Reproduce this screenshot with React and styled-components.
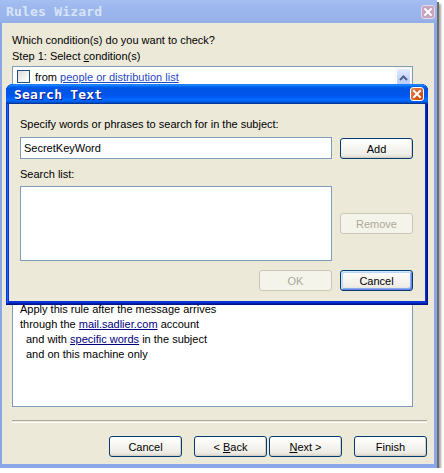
import React from 'react';
import styled, { createGlobalStyle } from 'styled-components';

const GlobalStyle = createGlobalStyle`
  html, body {
    margin: 0;
    padding: 0;
    background: #ffffff;
  }
  body {
    font-family: "Liberation Sans", Arial, sans-serif;
    font-size: 11px;
    color: #000000;
  }
`;

const Window = styled.div`
  position: relative;
  width: 437px;
  display: flex;
  flex-direction: column;
  padding: 0 3px 4px 2px;
  box-sizing: border-box;
  background: #8aa6e6;
  box-shadow: 2px 2px 0 #6d6d6d, 4px 4px 2px rgba(0, 0, 0, 0.35);
`;

const TitleBar = styled.div`
  height: 23px;
  margin: 0 -3px 0 -2px;
  display: flex;
  align-items: center;
  justify-content: space-between;
  padding: 0 2px 0 6px;
  background: ${(p) =>
    p.$active
      ? 'linear-gradient(180deg, #0058ee 0%, #3593ff 4%, #288eff 6%, #127dff 8%, #036ffc 10%, #0262ee 14%, #0057e5 20%, #0054e3 24%, #0055eb 56%, #005bf5 66%, #026afe 76%, #0062ef 86%, #0052d6 92%, #0040ab 94%, #003092 100%)'
      : 'linear-gradient(180deg, #a6bff2 0%, #9db8ee 30%, #9ab5ec 70%, #93aee6 100%)'};
`;

const Title = styled.span`
  font-family: "DejaVu Sans Mono", monospace;
  font-weight: bold;
  font-size: 13px;
  color: ${(p) => (p.$active ? '#ffffff' : '#d8e4f8')};
  text-shadow: ${(p) => (p.$active ? '1px 1px #0f1089' : 'none')};
  letter-spacing: 0.2px;
`;

const CloseButton = styled.div`
  width: 14px;
  height: 14px;
  box-sizing: border-box;
  border: 1px solid ${(p) => (p.$active ? '#ffffff' : '#e6d8e4')};
  border-radius: 3px;
  background: ${(p) =>
    p.$active
      ? 'radial-gradient(circle at 80% 80%, #cc4600 0%, #dc6527 55%, #e88a5a 100%)'
      : '#c7a5be'};
  display: flex;
  align-items: center;
  justify-content: center;
`;

const Body = styled.div`
  background: #ece9d8;
  display: flex;
  flex-direction: column;
  padding: 11px 7px 7px 10px;
`;

const Label = styled.div`
  line-height: 13px;
  height: 13px;
  margin-top: ${(p) => p.$mt || 0}px;
  white-space: nowrap;
`;

const ListBox = styled.div`
  width: 401px;
  height: ${(p) => p.$h}px;
  margin-top: ${(p) => p.$mt || 0}px;
  box-sizing: border-box;
  border: 1px solid #7f9db9;
  background: #ffffff;
  display: flex;
`;

const ListItems = styled.div`
  flex: 1;
  padding: 2px 2px;
`;

const CondRow = styled.div`
  display: flex;
  align-items: center;
  height: 15px;
  gap: 5px;
  padding-left: 2px;
`;

const Check = styled.span`
  width: 13px;
  height: 13px;
  box-sizing: border-box;
  border: 1px solid #1c5180;
  background: linear-gradient(135deg, #dcdcd7 0%, #ffffff 90%);
`;

const ScrollBar = styled.div`
  width: 17px;
  background: #f4f4f0;
  display: flex;
  flex-direction: column;
  padding-top: 1px;
`;

const ScrollBtn = styled.div`
  height: 17px;
  margin: 0 1px;
  border: 1px solid #ffffff;
  border-radius: 2px;
  background: linear-gradient(180deg, #e1eafe 0%, #c3d3fd 60%, #b6caf8 100%);
  display: flex;
  align-items: center;
  justify-content: center;
`;

const Link = styled.span`
  color: ${(p) => p.$color || '#0000cc'};
  text-decoration: underline;
`;

const Spacer = styled.div`
  height: ${(p) => p.$h}px;
`;

const DescBox = styled.div`
  width: 401px;
  height: 109px;
  margin-top: 9px;
  box-sizing: border-box;
  border: 1px solid #7f9db9;
  background: #ffffff;
  padding: 3px 7px;
`;

const DescLine = styled.div`
  line-height: 15px;
  white-space: nowrap;
  padding-left: ${(p) => (p.$indent ? 6 : 0)}px;
`;

const Separator = styled.div`
  height: 1px;
  margin-top: 13px;
  border-top: 1px solid #aca899;
  border-bottom: 1px solid #ffffff;
`;

const ButtonRow = styled.div`
  display: flex;
  justify-content: flex-end;
  margin-top: 13px;
`;

const Button = styled.button`
  width: 73px;
  height: 21px;
  margin-left: ${(p) => p.$ml || 0}px;
  padding: 0;
  box-sizing: border-box;
  font-family: "Liberation Sans", Arial, sans-serif;
  font-size: 11px;
  color: #000000;
  border: 1px solid #003c74;
  border-radius: 3px;
  background: linear-gradient(180deg, #ffffff 0%, #f6f5f1 45%, #eeede7 80%, #dcd8ce 100%);
  box-shadow: ${(p) =>
    p.$default
      ? 'inset 1px 1px 0 #cee7ff, inset -1px -1px 0 #6982ee, inset 2px 2px 0 #bcd4f6, inset -2px -2px 0 #89ade4'
      : 'inset -1px -1px 0 #d6d0c5'};
  &:disabled {
    color: #aca899;
    border-color: #c9c7ba;
    background: #f5f4ea;
    box-shadow: none;
  }
  u {
    text-decoration: underline;
  }
`;

const Dialog = styled.div`
  position: absolute;
  left: 6px;
  top: 84px;
  width: 422px;
  height: 221px;
  box-sizing: border-box;
  display: flex;
  flex-direction: column;
  border-radius: 7px 7px 0 0;
  background: #0831d9;
  padding: 0 3px 4px 3px;
  box-shadow: inset -1px -1px #00138c, inset 1px 1px #0831d9, inset -2px -2px #001ea0, inset 2px 2px #166aee;
`;

const DialogTitle = styled(TitleBar)`
  height: 20px;
  margin: 0 -3px;
  padding: 0 4px 0 8px;
  border-radius: 7px 7px 0 0;
`;

const DialogBody = styled.div`
  flex: 1;
  background: #ece9d8;
  display: grid;
  grid-template-columns: 312px 73px;
  column-gap: 8px;
  align-content: start;
  padding: 14px 12px 10px 11px;
`;

const Cell = styled.div`
  grid-column: ${(p) => p.$col || 'auto'};
  margin-top: ${(p) => p.$mt || 0}px;
  align-self: ${(p) => p.$align || 'stretch'};
  justify-self: ${(p) => p.$justify || 'stretch'};
  line-height: 13px;
`;

const TextInput = styled.div`
  height: 22px;
  box-sizing: border-box;
  border: 1px solid #7f9db9;
  background: #ffffff;
  padding: 0 3px;
  display: flex;
  align-items: center;
`;

const SearchList = styled.div`
  height: 75px;
  box-sizing: border-box;
  border: 1px solid #7f9db9;
  background: #ffffff;
`;

const CloseX = ({ active }) => (
  <svg width="10" height="10" viewBox="0 0 10 10">
    <path d="M2 2 L8 8 M8 2 L2 8" stroke="#ffffff" strokeWidth={active ? 2 : 1.8} strokeLinecap="square" />
  </svg>
);

export default function App() {
  return (
    <>
      <GlobalStyle />
      <Window>
        <TitleBar>
          <Title>Rules Wizard</Title>
          <CloseButton>
            <CloseX />
          </CloseButton>
        </TitleBar>
        <Body>
          <Label>Which condition(s) do you want to check?</Label>
          <Label $mt={3}>
            Step 1: Select <u>c</u>ondition(s)
          </Label>
          <ListBox $mt={3} $h={204}>
            <ListItems>
              <CondRow>
                <Check />
                <span>
                  from <Link $color="#1f48c4">people or distribution list</Link>
                </span>
              </CondRow>
            </ListItems>
            <ScrollBar>
              <ScrollBtn>
                <svg width="9" height="6" viewBox="0 0 9 6">
                  <path d="M1 5 L4.5 1.5 L8 5" fill="none" stroke="#4d6185" strokeWidth="2" />
                </svg>
              </ScrollBtn>
            </ScrollBar>
          </ListBox>
          {/* step 2 label sits behind the Search Text dialog */}
          <Spacer $h={19} />
          <DescBox>
            <DescLine>Apply this rule after the message arrives</DescLine>
            <DescLine>
              through the <Link $color="#000080">mail.sadlier.com</Link> account
            </DescLine>
            <DescLine $indent>
              and with <Link $color="#000080">specific words</Link> in the subject
            </DescLine>
            <DescLine $indent>and on this machine only</DescLine>
          </DescBox>
          <Separator />
          <ButtonRow>
            <Button>Cancel</Button>
            <Button $ml={12}>
              &lt; <u>B</u>ack
            </Button>
            <Button $ml={2}>
              <u>N</u>ext &gt;
            </Button>
            <Button $ml={12}>Finish</Button>
          </ButtonRow>
        </Body>

        <Dialog>
          <DialogTitle $active>
            <Title $active>Search Text</Title>
            <CloseButton $active>
              <CloseX active />
            </CloseButton>
          </DialogTitle>
          <DialogBody>
            <Cell $col="1 / 3">Specify words or phrases to search for in the subject:</Cell>
            <Cell $mt={6}>
              <TextInput>SecretKeyWord</TextInput>
            </Cell>
            <Cell $mt={7}>
              <Button>Add</Button>
            </Cell>
            <Cell $col="1 / 3" $mt={9}>
              Search list:
            </Cell>
            <Cell $mt={5}>
              <SearchList />
            </Cell>
            <Cell $mt={5} $align="center">
              <Button disabled>Remove</Button>
            </Cell>
            <Cell $mt={9} $justify="end">
              <Button disabled>OK</Button>
            </Cell>
            <Cell $mt={9}>
              <Button $default>Cancel</Button>
            </Cell>
          </DialogBody>
        </Dialog>
      </Window>
    </>
  );
}
